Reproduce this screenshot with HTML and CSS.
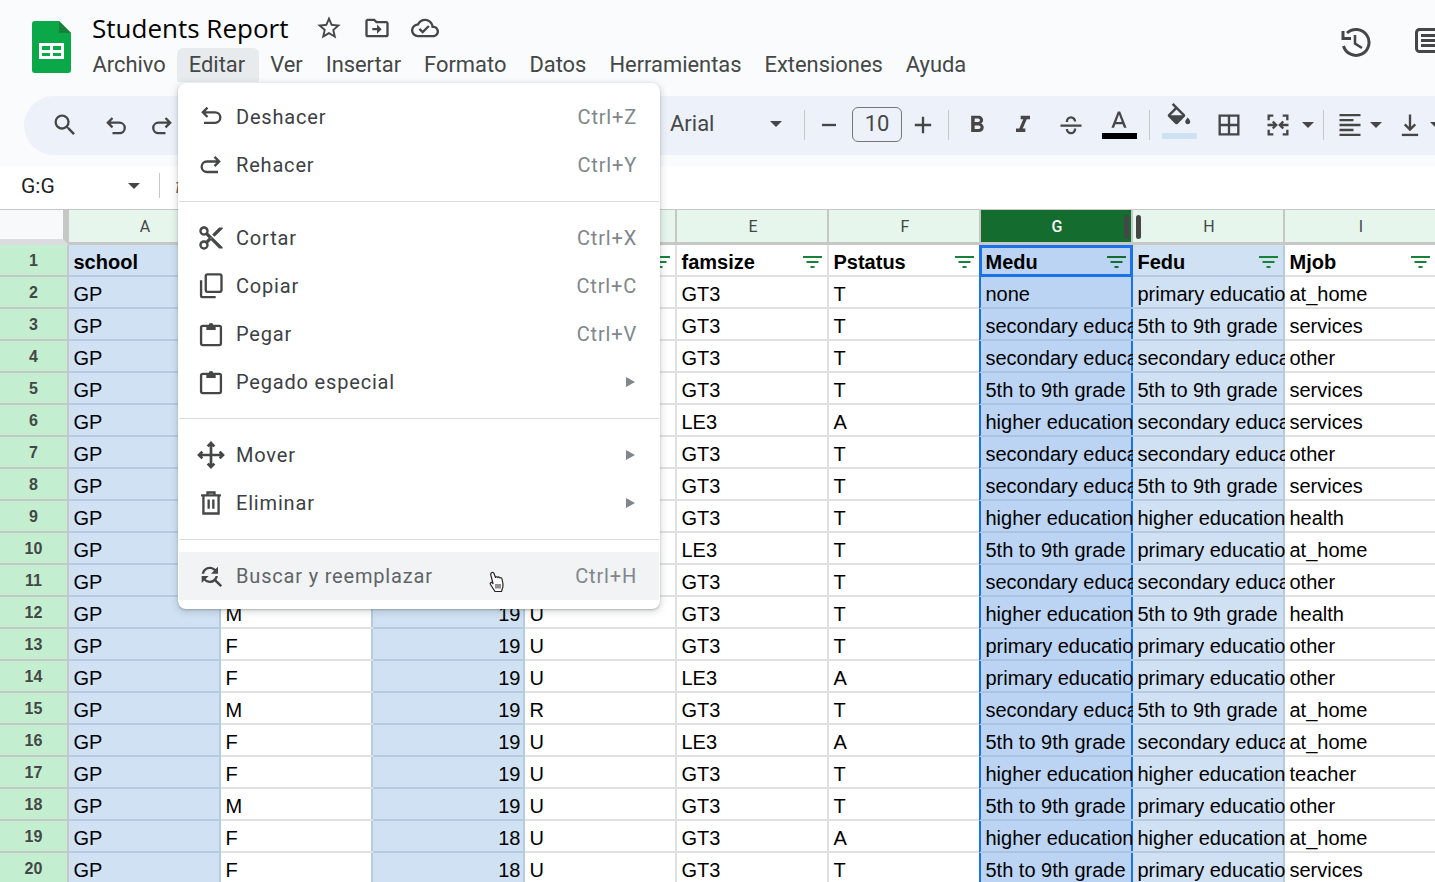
FILE: index.html
```html
<!DOCTYPE html>
<html lang="es">
<head>
    <meta charset="UTF-8">
    <title>Students Report</title>
    <link rel="stylesheet" href="styles.css">
</head>
<body>
    <header class="top">
        <svg class="logo" viewBox="0 0 39 52"><path d="M3 0H27L39 12V49a3 3 0 0 1-3 3H3a3 3 0 0 1-3-3V3a3 3 0 0 1 3-3z" fill="#0ba84a"/><path d="M27 0L39 12H27z" fill="#188038"/><path d="M7 22H32V38H7zM10 25V29H18V25zM21 25V29H29V25zM10 32V35H18V32zM21 32V35H29V32z" fill="#fff" fill-rule="evenodd"/></svg>
        <div class="docinfo">
            <div class="titlerow">
                <span class="doctitle">Students Report</span>
                <svg class="ico" viewBox="0 0 24 24"><path d="M22 9.240l-7.190-.62L12 2 9.190 8.630 2 9.240l5.460 4.730L5.820 21 12 17.270 18.180 21l-1.630-7.030L22 9.240zM12 15.400l-3.760 2.270 1-4.280-3.320-2.880 4.380-.38L12 6.100l1.710 4.040 4.380.38-3.320 2.880 1 4.280L12 15.400z"/></svg>
                <svg class="ico" viewBox="0 0 24 24"><path d="M20 6h-8l-2-2H4c-1.100 0-1.990.9-1.990 2L2 18c0 1.100.9 2 2 2h16c1.100 0 2-.9 2-2V8c0-1.100-.9-2-2-2zm0 12H4V6h5.170l2 2H20v10zm-8-4H8v-2h4V9l4 4-4 4v-3z"/></svg>
                <svg class="ico" viewBox="0 0 24 24"><path d="M19.350 10.040C18.670 6.590 15.640 4 12 4 9.110 4 6.600 5.640 5.350 8.040 2.340 8.360 0 10.910 0 14c0 3.310 2.690 6 6 6h13c2.760 0 5-2.240 5-5 0-2.640-2.050-4.780-4.650-4.960zM19 18H6c-2.210 0-4-1.790-4-4 0-2.050 1.530-3.760 3.560-3.970l1.070-.11.5-.95C8.080 7.140 9.940 6 12 6c2.620 0 4.880 1.860 5.390 4.430l.3 1.500 1.530.11c1.560.1 2.780 1.410 2.780 2.960 0 1.650-1.350 3-3 3zm-9-3.820l-2.090-2.090L6.500 13.500 10 17l6.010-6.010-1.410-1.410z"/></svg>
            </div>
            <nav class="menubar">
                <span>Archivo</span>
                <span class="open">Editar</span>
                <span>Ver</span>
                <span>Insertar</span>
                <span>Formato</span>
                <span>Datos</span>
                <span>Herramientas</span>
                <span>Extensiones</span>
                <span>Ayuda</span>
            </nav>
        </div>
        <div class="topright">
            <svg class="history" viewBox="0 0 30 30"><path d="M2 4V11.500H10" fill="none" stroke="#444746" stroke-width="3"/><path d="M6 6A13 13 0 1 1 2.500 19" fill="none" stroke="#444746" stroke-width="3"/><path d="M14 8V16.500L21 21" fill="none" stroke="#444746" stroke-width="2.600"/></svg>
            <svg class="comments" viewBox="0 0 30 26"><rect x="1.500" y="1.500" width="40" height="22" rx="3" fill="none" stroke="#444746" stroke-width="3"/><path d="M6 7.500H30M6 12.500H30M6 17.500H30" stroke="#444746" stroke-width="3"/></svg>
        </div>
    </header>

    <div class="toolbar">
        <div class="tool"><svg class="ico" viewBox="0 0 24 24"><path d="M15.500 14h-.79l-.28-.27A6.471 6.471 0 0 0 16 9.500 6.500 6.500 0 1 0 9.500 16c1.610 0 3.090-.59 4.230-1.570l.27.28v.79l5 4.990L20.490 19l-4.990-5zm-6 0C7.010 14 5 11.990 5 9.500S7.010 5 9.500 5 14 7.010 14 9.500 11.990 14 9.500 14z"/></svg></div>
        <div class="tool ml5"><svg class="ico" viewBox="0 0 24 24"><path class="ln" d="M9 6L5 10L9 14M5 10H15a4.500 4.500 0 0 1 0 9H9"/></svg></div>
        <div class="tool"><svg class="ico" viewBox="0 0 24 24"><path class="ln" d="M15 6L19 10L15 14M19 10H9a4.500 4.500 0 0 0 0 9H15"/></svg></div>
        <div class="hidden-tools"></div>
        <div class="fontname"><span>Arial</span><i class="caret"></i></div>
        <i class="sep"></i>
        <div class="tool wide"><svg class="ico" viewBox="0 0 24 24"><path d="M6 11h12v2H6z"/></svg></div>
        <div class="sizebox">10</div>
        <div class="tool narrow"><svg class="ico" viewBox="0 0 24 24"><path d="M11 5h2v6h6v2h-6v6h-2v-6H5v-2h6z"/></svg></div>
        <i class="sep ml4"></i>
        <div class="tool ml5"><svg class="ico" viewBox="0 0 24 24"><path d="M15.600 10.790c.97-.67 1.650-1.770 1.650-2.790 0-2.260-1.750-4-4-4H7v14h7.040c2.090 0 3.710-1.700 3.710-3.790 0-1.520-.86-2.820-2.150-3.420zM10 6.500h3c.83 0 1.500.67 1.500 1.500s-.67 1.500-1.500 1.500h-3v-3zm3.500 9H10v-3h3.500c.83 0 1.500.67 1.500 1.500s-.67 1.500-1.500 1.500z"/></svg></div>
        <div class="tool"><svg class="ico" viewBox="0 0 24 24"><path d="M10 4v3h2.210l-3.420 8H6v3h8v-3h-2.210l3.420-8H18V4z"/></svg></div>
        <div class="tool ml2"><svg class="ico" viewBox="0 0 24 24"><path class="ln" d="M3 12.500H21M8.500 9.500V9a3.500 3.500 0 0 1 7 0M8.500 15.500a3.500 3.500 0 0 0 7 0V15"/></svg></div>
        <div class="tool ml2 colortool"><svg class="ico" viewBox="0 0 24 24"><path d="M11 3L5.500 17h2.250l1.120-3h6.250l1.120 3h2.250L13 3h-2zm-1.380 9L12 5.670 14.380 12H9.620z"/></svg><i class="bar black"></i></div>
        <i class="sep ml7"></i>
        <div class="tool ml6 colortool"><svg class="ico fill" viewBox="0 0 24 24"><path d="M16.560 8.940L7.620 0 6.210 1.410l2.380 2.380-5.150 5.150c-.59.59-.59 1.540 0 2.120l5.500 5.500c.29.29.68.44 1.060.44s.77-.15 1.060-.44l5.500-5.500c.59-.58.59-1.530 0-2.120zM5.210 10L10 5.210 14.790 10H5.210zM19 11.500s-2 2.170-2 3.500c0 1.100.9 2 2 2s2-.9 2-2c0-1.330-2-3.500-2-3.500z"/><path d="M4.500 10H15.500L10 15.500z"/></svg><i class="bar pale"></i></div>
        <div class="tool ml4"><svg class="ico" viewBox="0 0 24 24"><path class="ln" d="M4 4H20V20H4zM12 4V20M4 12H20"/></svg></div>
        <div class="tool ml3"><svg class="ico" viewBox="0 0 24 24"><path class="ln" d="M8 4H4V8M8 20H4V16M16 4H20V8M16 20H20V16M3 12H10M7.500 9L10.500 12L7.500 15M21 12H14M16.500 9L13.500 12L16.500 15"/></svg></div>
        <i class="caret small"></i>
        <i class="sep ml9"></i>
        <div class="tool ml3"><svg class="ico" viewBox="0 0 24 24"><path d="M3 2.500h18v2H3zM3 6.750h12v2H3zM3 11h18v2H3zM3 15.250h12v2H3zM3 19.500h18v2H3z"/></svg></div>
        <i class="caret small pull"></i>
        <div class="tool ml5"><svg class="ico" viewBox="0 0 24 24"><path d="M5 19.500h14v2H5z"/><path class="ln" d="M12 3V16M7.500 11.500L12 16L16.500 11.500"/></svg></div>
        <i class="caret small pull"></i>
    </div>

    <div class="formulabar">
        <span class="namebox">G:G</span>
        <i class="caret"></i>
        <i class="sep"></i>
        <span class="fx">fx</span>
    </div>

    <main class="sheet">
        <div class="row head">
            <b></b><span>A</span><span>B</span><span>C</span><span>D</span><span>E</span><span>F</span>
            <span>G<i class="grip"></i></span><span><i class="grip right"></i>H</span><span>I</span>
        </div>
        <div class="row first">
            <b>1</b><span>school<svg class="filter"><use href="#flt"/></svg></span><span>sex<svg class="filter"><use href="#flt"/></svg></span><span>age<svg class="filter"><use href="#flt"/></svg></span><span>address<svg class="filter"><use href="#flt"/></svg></span><span>famsize<svg class="filter"><use href="#flt"/></svg></span><span>Pstatus<svg class="filter"><use href="#flt"/></svg></span><span>Medu<svg class="filter"><use href="#flt"/></svg></span><span>Fedu<svg class="filter"><use href="#flt"/></svg></span><span>Mjob<svg class="filter"><use href="#flt"/></svg></span>
        </div>
        <div class="row"><b>2</b><span>GP</span><span>F</span><span>18</span><span>U</span><span>GT3</span><span>T</span><span>none</span><span>primary education</span><span>at_home</span></div>
        <div class="row"><b>3</b><span>GP</span><span>F</span><span>17</span><span>U</span><span>GT3</span><span>T</span><span>secondary education</span><span>5th to 9th grade</span><span>services</span></div>
        <div class="row"><b>4</b><span>GP</span><span>F</span><span>15</span><span>U</span><span>GT3</span><span>T</span><span>secondary education</span><span>secondary education</span><span>other</span></div>
        <div class="row"><b>5</b><span>GP</span><span>F</span><span>16</span><span>U</span><span>GT3</span><span>T</span><span>5th to 9th grade</span><span>5th to 9th grade</span><span>services</span></div>
        <div class="row"><b>6</b><span>GP</span><span>M</span><span>16</span><span>U</span><span>LE3</span><span>A</span><span>higher education</span><span>secondary education</span><span>services</span></div>
        <div class="row"><b>7</b><span>GP</span><span>M</span><span>16</span><span>U</span><span>GT3</span><span>T</span><span>secondary education</span><span>secondary education</span><span>other</span></div>
        <div class="row"><b>8</b><span>GP</span><span>F</span><span>17</span><span>U</span><span>GT3</span><span>T</span><span>secondary education</span><span>5th to 9th grade</span><span>services</span></div>
        <div class="row"><b>9</b><span>GP</span><span>M</span><span>15</span><span>U</span><span>GT3</span><span>T</span><span>higher education</span><span>higher education</span><span>health</span></div>
        <div class="row"><b>10</b><span>GP</span><span>M</span><span>15</span><span>U</span><span>LE3</span><span>T</span><span>5th to 9th grade</span><span>primary education</span><span>at_home</span></div>
        <div class="row"><b>11</b><span>GP</span><span>F</span><span>15</span><span>U</span><span>GT3</span><span>T</span><span>secondary education</span><span>secondary education</span><span>other</span></div>
        <div class="row"><b>12</b><span>GP</span><span>M</span><span>19</span><span>U</span><span>GT3</span><span>T</span><span>higher education</span><span>5th to 9th grade</span><span>health</span></div>
        <div class="row"><b>13</b><span>GP</span><span>F</span><span>19</span><span>U</span><span>GT3</span><span>T</span><span>primary education</span><span>primary education</span><span>other</span></div>
        <div class="row"><b>14</b><span>GP</span><span>F</span><span>19</span><span>U</span><span>LE3</span><span>A</span><span>primary education</span><span>primary education</span><span>other</span></div>
        <div class="row"><b>15</b><span>GP</span><span>M</span><span>19</span><span>R</span><span>GT3</span><span>T</span><span>secondary education</span><span>5th to 9th grade</span><span>at_home</span></div>
        <div class="row"><b>16</b><span>GP</span><span>F</span><span>19</span><span>U</span><span>LE3</span><span>A</span><span>5th to 9th grade</span><span>secondary education</span><span>at_home</span></div>
        <div class="row"><b>17</b><span>GP</span><span>F</span><span>19</span><span>U</span><span>GT3</span><span>T</span><span>higher education</span><span>higher education</span><span>teacher</span></div>
        <div class="row"><b>18</b><span>GP</span><span>M</span><span>19</span><span>U</span><span>GT3</span><span>T</span><span>5th to 9th grade</span><span>primary education</span><span>other</span></div>
        <div class="row"><b>19</b><span>GP</span><span>F</span><span>18</span><span>U</span><span>GT3</span><span>A</span><span>higher education</span><span>higher education</span><span>at_home</span></div>
        <div class="row"><b>20</b><span>GP</span><span>F</span><span>18</span><span>U</span><span>GT3</span><span>T</span><span>5th to 9th grade</span><span>primary education</span><span>services</span></div>
    </main>

    <svg width="0" height="0" class="defs"><symbol id="flt" viewBox="0 0 19 12"><path d="M0 0H19V2H0zM3.500 5H15.500V7H3.500zM7.500 10H11.500V12H7.500z"/></symbol></svg>

    <div class="menu">
        <div class="item"><svg class="ico" viewBox="0 0 24 24"><path class="ln" d="M9 4L5 8L9 12M5 8H15.500a4.500 4.500 0 0 1 0 9H6"/></svg><span>Deshacer</span><kbd>Ctrl+Z</kbd></div>
        <div class="item"><svg class="ico" viewBox="0 0 24 24"><path class="ln" d="M15 5L19 9L15 13M19 9H8.500a4.500 4.500 0 0 0 0 9H18"/></svg><span>Rehacer</span><kbd>Ctrl+Y</kbd></div>
        <hr>
        <div class="item"><svg class="ico" viewBox="0 0 24 24"><path d="M9.640 7.640c.23-.5.36-1.050.36-1.640 0-2.210-1.790-4-4-4S2 3.790 2 6s1.790 4 4 4c.59 0 1.140-.13 1.640-.36L10 12l-2.360 2.360C7.140 14.130 6.590 14 6 14c-2.210 0-4 1.790-4 4s1.790 4 4 4 4-1.790 4-4c0-.59-.13-1.140-.36-1.640L12 14l7 7h3v-1L9.640 7.640zM6 8c-1.100 0-2-.89-2-2s.9-2 2-2 2 .89 2 2-.9 2-2 2zm0 12c-1.100 0-2-.89-2-2s.9-2 2-2 2 .89 2 2-.9 2-2 2zm6-7.500c-.28 0-.5-.22-.5-.5s.22-.5.5-.5.5.22.5.5-.22.5-.5.500zM19 3l-6 6 2 2 7-7V3z"/></svg><span>Cortar</span><kbd>Ctrl+X</kbd></div>
        <div class="item"><svg class="ico" viewBox="0 0 24 24"><rect class="ln" x="7.500" y="2" width="13.500" height="15" rx="1.500"/><path class="ln" d="M3.500 7V20.500a1 1 0 0 0 1 1H16"/></svg><span>Copiar</span><kbd>Ctrl+C</kbd></div>
        <div class="item"><svg class="ico" viewBox="0 0 24 24"><rect class="ln" x="3.500" y="5" width="17" height="16.500" rx="1.500"/><path d="M8 4.500H10A2 2 0 0 1 14 4.500H16V8.500H8z"/></svg><span>Pegar</span><kbd>Ctrl+V</kbd></div>
        <div class="item"><svg class="ico" viewBox="0 0 24 24"><rect class="ln" x="3.500" y="5" width="17" height="16.500" rx="1.500"/><path d="M8 4.500H10A2 2 0 0 1 14 4.500H16V8.500H8z"/></svg><span>Pegado especial</span><em></em></div>
        <hr>
        <div class="item"><svg class="ico big" viewBox="0 0 24 24"><path class="ln" d="M12 3V21M3 12H21M9.500 5.500L12 3L14.500 5.500M9.500 18.500L12 21L14.500 18.500M5.500 9.500L3 12L5.500 14.500M18.500 9.500L21 12L18.500 14.500"/></svg><span>Mover</span><em></em></div>
        <div class="item"><svg class="ico" viewBox="0 0 24 24"><path class="ln" d="M3.500 5.500H20.500M9 5.500V3H15V5.500M5.500 5.500V21H18.500V5.500M10 9V17M14 9V17"/></svg><span>Eliminar</span><em></em></div>
        <hr>
        <div class="item hover"><svg class="ico" viewBox="0 0 24 24"><path d="M11 6c1.380 0 2.630.56 3.540 1.460L12 10h6V4l-2.050 2.050C14.680 4.780 12.930 4 11 4c-3.530 0-6.430 2.610-6.920 6H6.100c.46-2.280 2.480-4 4.900-4zm5.640 9.140c.66-.9 1.120-1.970 1.280-3.140H15.900c-.46 2.280-2.480 4-4.900 4-1.380 0-2.630-.56-3.540-1.460L10 12H4v6l2.050-2.050C7.320 17.220 9.070 18 11 18c1.550 0 2.980-.51 4.140-1.360L20 21.490 21.490 20l-4.850-4.860z"/></svg><span>Buscar y reemplazar</span><kbd>Ctrl+H</kbd></div>
    </div>

    <svg class="pointer" viewBox="0 0 16 22"><path d="M3.500 1.800C4.500 1 5.600 1.500 6 2.500L7.500 6.500C7.800 5.500 9.300 5.500 9.800 6.500C10.200 5.700 11.600 5.800 12 7C12.500 6.400 13.800 6.700 14 8L15 13C15.400 16 14.500 18 13.500 20.500H7L2.500 13.500C1.600 12 3 10.800 4.500 12L5 12.500L2.800 4C2.500 3 2.800 2.300 3.500 1.800Z" fill="#fff" stroke="#222" stroke-width="1.200" stroke-linejoin="round"/><path d="M8 13V17.500M10 13V17.500M12 13V17.500" stroke="#222" stroke-width="1"/></svg>
</body>
</html>
```

FILE: styles.css
```css
* {
    box-sizing: border-box;
}
html, body {
    margin: 0;
    height: 100%;
    overflow: hidden;
}
body {
    font-family: Roboto, sans-serif;
    background: #f9fbfd;
    color: #1f1f1f;
    display: flex;
    flex-direction: column;
}
.ico {
    width: 28px;
    height: 28px;
    fill: #444746;
    display: block;
    flex: none;
}
.ln {
    fill: none;
    stroke: #444746;
    stroke-width: 2;
}

/* title and menus */
.top {
    height: 96px;
    flex: none;
    display: flex;
    padding-left: 32px;
}
.logo {
    width: 39px;
    height: 52px;
    margin-top: 21px;
    flex: none;
}
.docinfo {
    margin-left: 10px;
}
.titlerow {
    height: 48px;
    padding: 8px 0 0 11px;
    display: flex;
    align-items: center;
    gap: 20px;
}
.doctitle {
    font-family: "Open Sans", sans-serif;
    font-size: 26px;
    width: 203px;
    color: #000;
    white-space: nowrap;
}
.menubar {
    display: flex;
    height: 34px;
}
.menubar span {
    padding: 0 11.5px;
    font-size: 21.900px;
    line-height: 34px;
    color: #444746;
    white-space: nowrap;
    border-radius: 6px 6px 0 0;
}
.menubar .open {
    padding-right: 13.5px;
    background: #e8ebee;
}
.topright {
    margin-left: auto;
    width: 94px;
    overflow: hidden;
    display: flex;
    gap: 44px;
    padding-top: 27px;
}
.history {
    width: 30px;
    height: 30px;
    flex: none;
}
.comments {
    width: 30px;
    height: 26px;
    flex: none;
    margin-top: 1px;
}

/* toolbar */
.toolbar {
    height: 59px;
    flex: none;
    margin: 0 -60px 11px 24px;
    padding: 0 0 2px 18px;
    background: #edf2fa;
    border-radius: 30px;
    display: flex;
    align-items: center;
    font-size: 22px;
    color: #444746;
}
.tool {
    width: 46px;
    height: 34px;
    flex: none;
    display: flex;
    align-items: center;
    justify-content: center;
    position: relative;
}
.tool.narrow {
    width: 42px;
}
.tool.wide {
    width: 47px;
}
.hidden-tools {
    width: 485px;
    flex: none;
}
.fontname {
    width: 120px;
    flex: none;
    display: flex;
    align-items: center;
    justify-content: space-between;
    padding: 0 8px 2px 0;
}
.caret {
    width: 0;
    height: 0;
    flex: none;
    border-left: 6px solid transparent;
    border-right: 6px solid transparent;
    border-top: 6px solid #444746;
}
.caret.small {
    margin-left: 1px;
}
.caret.pull {
    margin-left: -3px;
}
.sep {
    width: 1px;
    height: 30px;
    flex: none;
    margin-left: 14px;
    background: #c7c7c7;
}
.sizebox {
    width: 50px;
    height: 35px;
    flex: none;
    border: 1px solid #747775;
    border-radius: 6px;
    text-align: center;
    line-height: 32px;
}
.colortool .bar {
    position: absolute;
    left: 0;
    right: 0;
    margin: auto;
    width: 35px;
    height: 6px;
    bottom: 3px;
}
.colortool .ico {
    margin-top: -6px;
}
.bar.black {
    background: #000;
}
.bar.pale {
    background: #cfe2f3;
}
.colortool .ico.fill {
    width: 30px;
    height: 30px;
    margin-top: -14px;
}
.toolbar .ml2 { margin-left: 2px; }
.toolbar .ml3 { margin-left: 3px; }
.toolbar .ml4 { margin-left: 4px; }
.toolbar .ml5 { margin-left: 5px; }
.toolbar .ml6 { margin-left: 6px; }
.toolbar .ml7 { margin-left: 7px; }
.toolbar .ml9 { margin-left: 9px; }

/* name box */
.formulabar {
    height: 43px;
    flex: none;
    background: #fff;
    display: flex;
    align-items: center;
    padding: 0 0 4px 21px;
    font-size: 21px;
}
.namebox {
    width: 107px;
    color: #1f1f1f;
}
.formulabar .sep {
    height: 25px;
    margin-left: 19px;
}
.fx {
    margin-left: 15px;
    font-style: italic;
    color: #5f6368;
}

/* grid */
.sheet {
    flex: 1;
    overflow: hidden;
    background: #fff;
    font-family: "Liberation Sans", Arial, sans-serif;
    font-size: 20px;
    color: #000;
}
.row {
    display: grid;
    grid-template-columns: 69px repeat(9, 152px);
    grid-template-rows: 100%;
    height: 32px;
}
.row > b {
    background: #c4eed0;
    border-right: 2px solid #c7c7c7;
    border-bottom: 2px solid #c7c7c7;
    font-size: 16px;
    color: #444746;
    text-align: center;
    line-height: 32px;
}
/* the right line is a shadow so long text runs over it before it clips */
.row > span {
    --line: #e1e1e1;
    position: relative;
    padding-left: 4.500px;
    line-height: 34px;
    white-space: nowrap;
    overflow: hidden;
    box-shadow: inset -2px 0 0 var(--line);
    border-bottom: 2px solid #e1e1e1;
}
/* selected columns A, C, G, H */
.row > :nth-child(2),
.row > :nth-child(4),
.row > :nth-child(8),
.row > :nth-child(9) {
    --line: #b7cade;
    background: #cfe1f3;
    border-color: #b7cade;
}
/* lines shared with a selected column */
.row > :nth-child(3),
.row > :nth-child(7) {
    --line: #b7cade;
}
.row > :nth-child(4) {
    text-align: right;
    padding: 0 4.500px 0 0;
}
.row > :nth-child(8) {
    --line: #1a73e8;
    background: #bbd4f3;
    border-bottom-color: #a9c3e0;
    border-left: 2px solid #1a73e8;
    margin-left: -2px;
    padding-left: 4.500px;
}
.row.first > span {
    font-weight: bold;
    text-align: left;
    padding: 0 0 0 4.500px;
}
.row.first > :nth-child(3),
.row.first > :nth-child(5),
.row.first > :nth-child(6),
.row.first > :nth-child(7),
.row.first > :nth-child(10) {
    background: #fff;
}
.row.first > :nth-child(8) {
    border: 3px solid #1a73e8;
    box-shadow: none;
    padding-left: 3.500px;
    line-height: 28px;
}
.filter {
    position: absolute;
    right: 7px;
    top: 11px;
    width: 19px;
    height: 12px;
    fill: #188038;
}
.row.first > :nth-child(8) .filter {
    top: 8px;
    right: 4px;
    fill: #146c2e;
}
.row.head {
    height: 37px;
    border-top: 2px solid #c7c7c7;
    margin-top: -1px;
}
.row.head > b {
    background: #f8f9fa;
    border-right: 6px solid #c7c7c7;
    border-bottom: 6px solid #dadce0;
}
.row.head > span {
    background: #e6f6ec;
    box-shadow: none;
    border-right: 2px solid #c7c7c7;
    border-bottom: 3px solid #c7c7c7;
    margin: 0;
    padding: 0 0 0 2px;
    font-family: Roboto, sans-serif;
    font-size: 16px;
    line-height: 34px;
    color: #444746;
    text-align: center;
}
.row.head > span:nth-child(8) {
    background: #146c2e;
    color: #fff;
    font-weight: 500;
    border-left: 0;
}
.grip {
    position: absolute;
    top: 5px;
    right: 2px;
    width: 5px;
    height: 24px;
    border-radius: 3px;
    background: #444746;
}
.grip.right {
    right: auto;
    left: 3px;
}

/* Editar dropdown */
.menu {
    position: absolute;
    left: 178px;
    top: 83px;
    width: 482px;
    padding: 10px 0 9px;
    background: #fff;
    border-radius: 8px;
    box-shadow: 0 2px 6px 2px rgba(60, 64, 67, 0.15), 0 1px 2px rgba(60, 64, 67, 0.3);
    font-size: 20px;
    letter-spacing: 0.82px;
    color: #3c4043;
}
.menu hr {
    margin: 12px 1px;
    border: 0;
    border-top: 1px solid #dadce0;
}
.item {
    height: 48px;
    display: flex;
    align-items: center;
    padding: 0 23px 0 19px;
}
.item span {
    margin-left: 11px;
    flex: 1;
}
.item kbd {
    font: inherit;
    color: #80868b;
}
.item em {
    width: 0;
    height: 0;
    margin-right: 2px;
    border-left: 9px solid #80868b;
    border-top: 5px solid transparent;
    border-bottom: 5px solid transparent;
}
.item.hover {
    background: #f1f3f4;
    margin: 0 1px;
    padding-left: 18px;
    padding-right: 22px;
}
.item.hover span {
    color: #5f6368;
}
.ico.big {
    width: 32px;
    height: 32px;
    margin: 0 -2px;
}
.pointer {
    position: absolute;
    left: 488px;
    top: 571px;
    width: 16px;
    height: 22px;
}
.defs {
    position: absolute;
}
```
